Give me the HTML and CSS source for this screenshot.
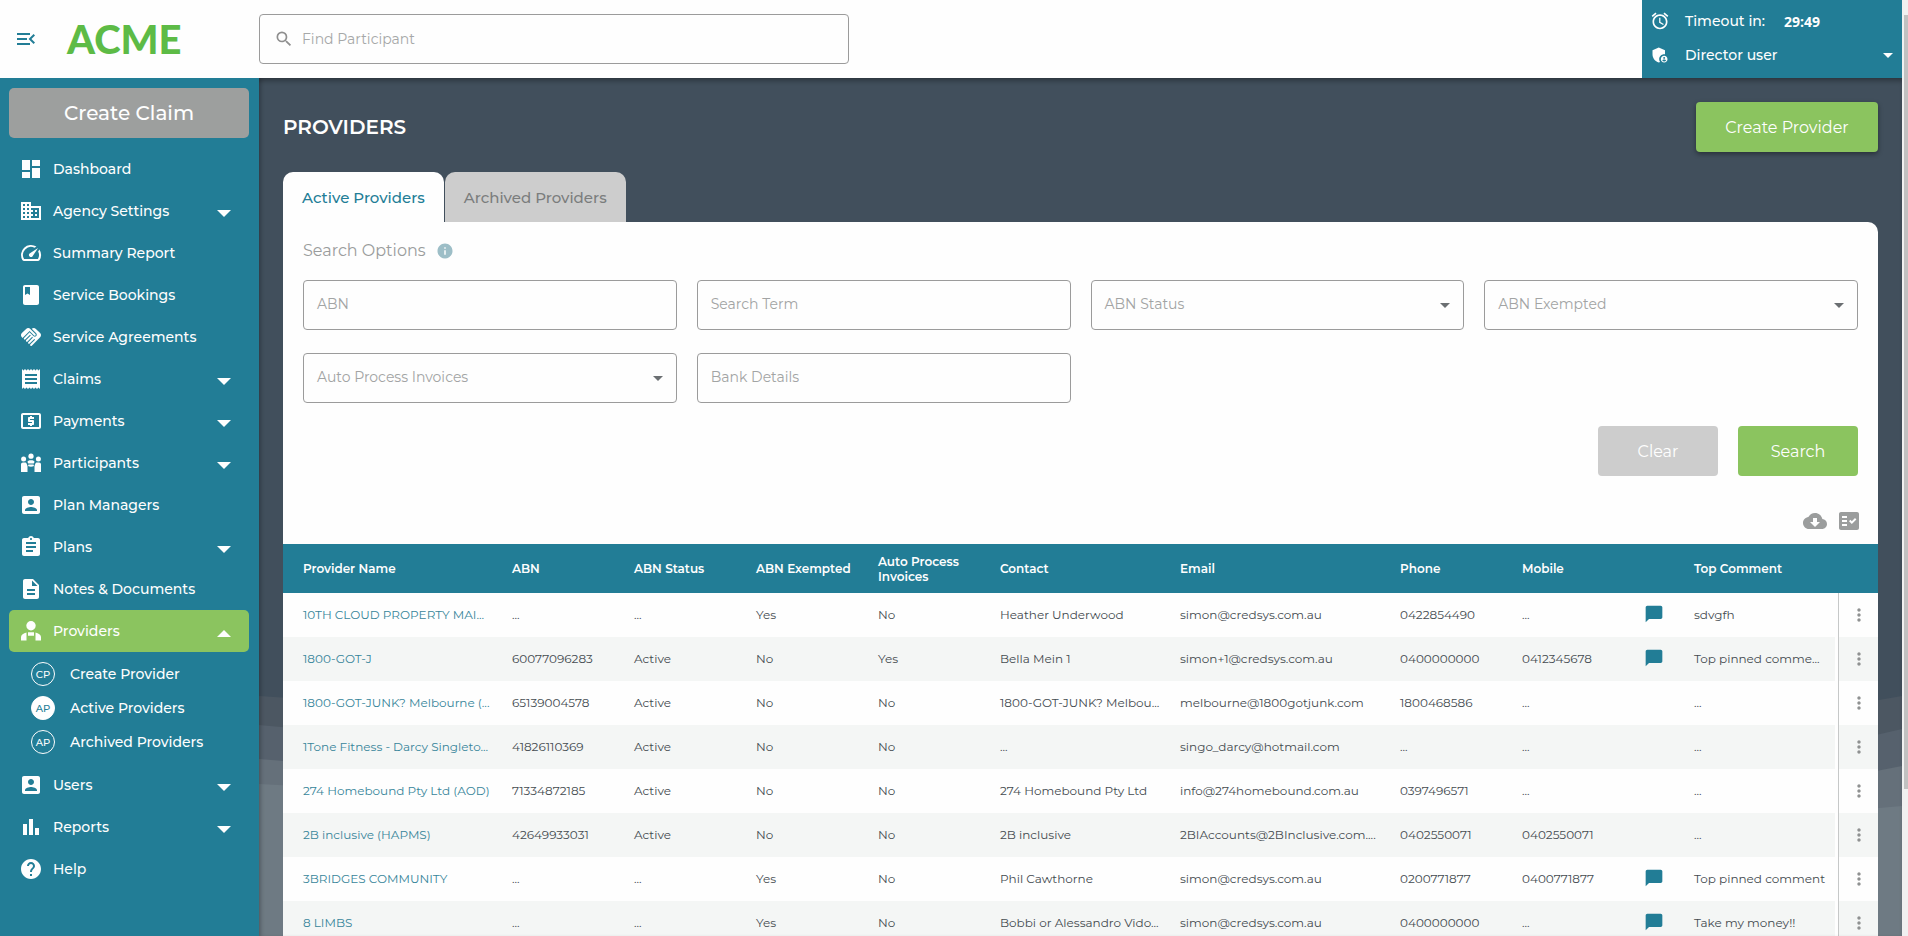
FILE: index.html
```html
<!DOCTYPE html>
<html lang="en">
<head>
    <meta charset="UTF-8">
    <meta name="viewport" content="width=device-width, initial-scale=1.0">
    <title>Providers</title>
    <link rel="stylesheet" href="styles.css">
</head>
<body>
    <!-- Icon sprite -->
    <svg class="sprite" aria-hidden="true">
        <symbol id="i-menu" viewBox="0 0 24 24"><path d="M3 18h13v-2H3v2zm0-5h10v-2H3v2zm0-7v2h13V6H3zm18 9.59L17.42 12 21 8.41 19.59 7l-5 5 5 5L21 15.59z"/></symbol>
        <symbol id="i-search" viewBox="0 0 24 24"><path d="M15.5 14h-.79l-.28-.27A6.47 6.47 0 0 0 16 9.5 6.5 6.5 0 1 0 9.5 16c1.61 0 3.09-.59 4.23-1.57l.27.28v.79l5 4.99L20.49 19l-4.99-5zm-6 0C7.01 14 5 11.99 5 9.5S7.01 5 9.5 5 14 7.01 14 9.5 11.99 14 9.5 14z"/></symbol>
        <symbol id="i-alarm" viewBox="0 0 24 24"><path d="M22 5.72l-4.6-3.86-1.29 1.53 4.6 3.86L22 5.72zM7.88 3.39L6.6 1.86 2 5.71l1.29 1.53 4.59-3.85zM12.5 8H11v6l4.75 2.85.75-1.23-4-2.37V8zM12 4c-4.97 0-9 4.03-9 9s4.02 9 9 9c4.97 0 9-4.03 9-9s-4.03-9-9-9zm0 16c-3.87 0-7-3.13-7-7s3.13-7 7-7 7 3.13 7 7-3.13 7-7 7z"/></symbol>
        <symbol id="i-admin" viewBox="0 0 24 24"><path d="M17 11c.34 0 .67.04 1 .09V6.27L10.5 3 3 6.27v4.91c0 4.54 3.2 8.79 7.5 9.82.55-.13 1.08-.32 1.6-.55-.69-.98-1.1-2.17-1.1-3.45 0-3.31 2.69-6 6-6zm0 2c-2.21 0-4 1.79-4 4s1.79 4 4 4 4-1.79 4-4-1.79-4-4-4zm0 1.38c.62 0 1.12.51 1.12 1.12s-.51 1.12-1.12 1.12-1.12-.51-1.12-1.12.5-1.12 1.12-1.12zm0 5.37c-.93 0-1.74-.46-2.24-1.17.05-.72 1.51-1.08 2.24-1.08s2.19.36 2.24 1.08c-.5.71-1.31 1.17-2.24 1.17z"/></symbol>
        <symbol id="i-dashboard" viewBox="0 0 24 24"><path d="M3 13h8V3H3v10zm0 8h8v-6H3v6zm10 0h8V11h-8v10zm0-18v6h8V3h-8z"/></symbol>
        <symbol id="i-agency" viewBox="0 0 24 24"><path d="M12 7V3H2v18h20V7H12zM6 19H4v-2h2v2zm0-4H4v-2h2v2zm0-4H4V9h2v2zm0-4H4V5h2v2zm4 12H8v-2h2v2zm0-4H8v-2h2v2zm0-4H8V9h2v2zm0-4H8V5h2v2zm10 12h-8v-2h2v-2h-2v-2h2v-2h-2V9h8v10zm-2-8h-2v2h2v-2zm0 4h-2v2h2v-2z"/></symbol>
        <symbol id="i-speed" viewBox="0 0 24 24"><path d="M20.38 8.57l-1.23 1.85a8 8 0 0 1-.22 7.58H5.07A8 8 0 0 1 15.58 6.85l1.85-1.23A10 10 0 0 0 3.35 19a2 2 0 0 0 1.72 1h13.85a2 2 0 0 0 1.74-1 10 10 0 0 0-.27-10.44zm-9.79 6.84a2 2 0 0 0 2.83 0l5.66-8.49-8.49 5.66a2 2 0 0 0 0 2.83z"/></symbol>
        <symbol id="i-book" viewBox="0 0 24 24"><path d="M18 2H6c-1.1 0-2 .9-2 2v16c0 1.1.9 2 2 2h12c1.1 0 2-.9 2-2V4c0-1.1-.9-2-2-2zM6 4h5v8l-2.5-1.5L6 12V4z"/></symbol>
        <symbol id="i-handshake" viewBox="0 0 24 24"><path d="M16.48 10.41c-.39.39-1.04.39-1.43 0l-4.47-4.46-7.05 7.04-.66-.63c-1.17-1.17-1.17-3.07 0-4.24l4.24-4.24c1.17-1.17 3.07-1.17 4.24 0L16.48 9c.39.39.39 1.02 0 1.41zm.7-2.12c.78.78.78 2.05 0 2.83-1.27 1.27-2.61.22-2.83 0l-3.76-3.76-5.57 5.57c-.39.39-.39 1.02 0 1.41.39.39 1.02.39 1.42 0l4.62-4.62.71.71-4.62 4.62c-.39.39-.39 1.02 0 1.41.39.39 1.02.39 1.42 0l4.62-4.62.71.71-4.62 4.62c-.39.39-.39 1.02 0 1.41.39.39 1.02.39 1.41 0l4.62-4.62.71.71-4.62 4.62c-.39.39-.39 1.02 0 1.41.39.39 1.02.39 1.41 0l8.32-8.34c1.17-1.17 1.17-3.07 0-4.24l-4.24-4.24c-1.15-1.15-3.01-1.17-4.18-.06l4.47 4.47z"/></symbol>
        <symbol id="i-receipt" viewBox="0 0 24 24"><path d="M18 17H6v-2h12v2zm0-4H6v-2h12v2zm0-4H6V7h12v2zM3 22l1.5-1.5L6 22l1.5-1.5L9 22l1.5-1.5L12 22l1.5-1.5L15 22l1.5-1.5L18 22l1.5-1.5L21 22V2l-1.5 1.5L18 2l-1.5 1.5L15 2l-1.5 1.5L12 2l-1.5 1.5L9 2 7.5 3.5 6 2 4.5 3.5 3 2v20z"/></symbol>
        <symbol id="i-payment" viewBox="0 0 24 24"><path d="M11 17h2v-1h1c.55 0 1-.45 1-1v-3c0-.55-.45-1-1-1h-3v-1h4V8h-2V7h-2v1h-1c-.55 0-1 .45-1 1v3c0 .55.45 1 1 1h3v1H9v2h2v1zm9-13H4c-1.11 0-1.99.89-1.99 2L2 18c0 1.11.89 2 2 2h16c1.11 0 2-.89 2-2V6c0-1.11-.89-2-2-2zm0 14H4V6h16v12z"/></symbol>
        <symbol id="i-people" viewBox="0 0 24 24"><circle cx="12" cy="5.2" r="2.6"/><circle cx="4.6" cy="8" r="2.5"/><circle cx="19.4" cy="8" r="2.5"/><path d="M2 13.5c0-1.2.8-2 2-2h1.8c1 0 1.6.5 1.9 1.3l.8 2.2v6H2zM22 13.5c0-1.2-.8-2-2-2h-1.800c-1 0-1.600.5-1.900 1.300l-.8 2.200v6H22z"/><path d="M8.500 11c0-1.200 1.300-1.800 3.500-1.800s3.500.6 3.500 1.800l-.8 1.400H9.300zM9.500 13.500h5l.5 1.500c-1.800 1-4.200 1-6 0z"/></symbol>
        <symbol id="i-account" viewBox="0 0 24 24"><path d="M3 5v14c0 1.100.89 2 2 2h14c1.100 0 2-.9 2-2V5c0-1.100-.9-2-2-2H5c-1.110 0-2 .9-2 2zm12 4c0 1.660-1.340 3-3 3s-3-1.340-3-3 1.340-3 3-3 3 1.340 3 3zm-9 8c0-2 4-3.100 6-3.100s6 1.100 6 3.100v1H6v-1z"/></symbol>
        <symbol id="i-plans" viewBox="0 0 24 24"><path d="M19 3h-4.180C14.400 1.840 13.300 1 12 1c-1.300 0-2.400.84-2.820 2H5c-1.100 0-2 .9-2 2v14c0 1.100.9 2 2 2h14c1.100 0 2-.9 2-2V5c0-1.100-.9-2-2-2zm-7 0c.55 0 1 .45 1 1s-.45 1-1 1-1-.45-1-1 .45-1 1-1zm2 14H7v-2h7v2zm3-4H7v-2h10v2zm0-4H7V7h10v2z"/></symbol>
        <symbol id="i-notes" viewBox="0 0 24 24"><path d="M14 2H6c-1.100 0-1.990.9-1.990 2L4 20c0 1.100.89 2 1.990 2H18c1.100 0 2-.9 2-2V8l-6-6zm2 16H8v-2h8v2zm0-4H8v-2h8v2zm-3-5V3.500L18.500 9H13z"/></symbol>
        <symbol id="i-provider" viewBox="0 0 24 24"><circle cx="12" cy="6.800" r="4.700"/><path d="M7.500 13.500v8H2v-3.500c0-2.300 2.500-3.800 5.500-4.500zM16.500 13.500v8H22v-3.500c0-2.300-2.500-3.800-5.500-4.500zM9 13.300h6v3.400H9z"/></symbol>
        <symbol id="i-reports" viewBox="0 0 24 24"><path d="M4 20h4V9H4zM10 20h4V4h-4zM16 20h4v-7h-4z"/></symbol>
        <symbol id="i-help" viewBox="0 0 24 24"><path d="M12 2C6.480 2 2 6.480 2 12s4.480 10 10 10 10-4.480 10-10S17.520 2 12 2zm1 17h-2v-2h2v2zm2.070-7.750l-.9.920C13.450 12.900 13 13.500 13 15h-2v-.5c0-1.100.45-2.100 1.170-2.830l1.240-1.260c.37-.36.590-.86.590-1.410 0-1.100-.9-2-2-2s-2 .9-2 2H8c0-2.210 1.790-4 4-4s4 1.790 4 4c0 .88-.36 1.680-.93 2.250z"/></symbol>
        <symbol id="i-info" viewBox="0 0 24 24"><path d="M12 2C6.480 2 2 6.480 2 12s4.480 10 10 10 10-4.480 10-10S17.520 2 12 2zm1 15h-2v-6h2v6zm0-8h-2V7h2v2z"/></symbol>
        <symbol id="i-cloud" viewBox="0 0 24 24"><path d="M19.350 10.040C18.670 6.590 15.640 4 12 4 9.110 4 6.600 5.640 5.350 8.040 2.340 8.360 0 10.910 0 14c0 3.310 2.690 6 6 6h13c2.760 0 5-2.240 5-5 0-2.640-2.050-4.780-4.650-4.960zM17 13l-5 5-5-5h3V9h4v4h3z"/></symbol>
        <symbol id="i-columns" viewBox="0 0 24 24"><path d="M20 3H4c-1.100 0-2 .9-2 2v14c0 1.100.9 2 2 2h16c1.100 0 2-.9 2-2V5c0-1.100-.9-2-2-2zM10 17H5v-2h5v2zm0-4H5v-2h5v2zm0-4H5V7h5v2zm4.820 6L12 12.160l1.410-1.410 1.410 1.420L17.990 9l1.420 1.420L14.820 15z"/></symbol>
        <symbol id="i-comment" viewBox="0 0 24 24"><path d="M20 2H4c-1.100 0-2 .9-2 2v18l4-4h14c1.100 0 2-.9 2-2V4c0-1.100-.9-2-2-2z"/></symbol>
        <symbol id="i-more" viewBox="0 0 24 24"><path d="M12 8c1.100 0 2-.9 2-2s-.9-2-2-2-2 .9-2 2 .9 2 2 2zm0 2c-1.100 0-2 .9-2 2s.9 2 2 2 2-.9 2-2-.9-2-2-2zm0 6c-1.100 0-2 .9-2 2s.9 2 2 2 2-.9 2-2-.9-2-2-2z"/></symbol>
        <symbol id="i-down" viewBox="0 0 14 7"><path d="M0 0h14L7 7z"/></symbol>
        <symbol id="i-up" viewBox="0 0 14 7"><path d="M0 7h14L7 0z"/></symbol>
    </svg>

    <div class="app">
        <header class="topbar">
            <div class="brand">
                <button class="icon-btn" aria-label="Toggle menu"><svg class="icon menu-icon"><use href="#i-menu"/></svg></button>
                <a href="#" class="logo">ACME</a>
            </div>
            <div class="find">
                <svg class="icon"><use href="#i-search"/></svg>
                <input type="search" aria-label="Find Participant" placeholder="Find Participant">
            </div>
            <div class="session">
                <div class="session-row">
                    <svg class="icon"><use href="#i-alarm"/></svg>
                    <span>Timeout in:</span>
                    <strong>29:49</strong>
                </div>
                <button class="session-row">
                    <svg class="icon"><use href="#i-admin"/></svg>
                    <span>Director user</span>
                    <svg class="caret small"><use href="#i-down"/></svg>
                </button>
            </div>
        </header>

        <div class="body">
            <nav class="sidebar">
                <button class="create-claim">Create Claim</button>
                <a href="#" class="nav-item"><svg class="icon"><use href="#i-dashboard"/></svg>Dashboard</a>
                <a href="#" class="nav-item"><svg class="icon"><use href="#i-agency"/></svg>Agency Settings<svg class="caret"><use href="#i-down"/></svg></a>
                <a href="#" class="nav-item"><svg class="icon"><use href="#i-speed"/></svg>Summary Report</a>
                <a href="#" class="nav-item"><svg class="icon"><use href="#i-book"/></svg>Service Bookings</a>
                <a href="#" class="nav-item"><svg class="icon"><use href="#i-handshake"/></svg>Service Agreements</a>
                <a href="#" class="nav-item"><svg class="icon"><use href="#i-receipt"/></svg>Claims<svg class="caret"><use href="#i-down"/></svg></a>
                <a href="#" class="nav-item"><svg class="icon"><use href="#i-payment"/></svg>Payments<svg class="caret"><use href="#i-down"/></svg></a>
                <a href="#" class="nav-item"><svg class="icon"><use href="#i-people"/></svg>Participants<svg class="caret"><use href="#i-down"/></svg></a>
                <a href="#" class="nav-item"><svg class="icon"><use href="#i-account"/></svg>Plan Managers</a>
                <a href="#" class="nav-item"><svg class="icon"><use href="#i-plans"/></svg>Plans<svg class="caret"><use href="#i-down"/></svg></a>
                <a href="#" class="nav-item"><svg class="icon"><use href="#i-notes"/></svg>Notes &amp; Documents</a>
                <a href="#" class="nav-item active"><svg class="icon"><use href="#i-provider"/></svg>Providers<svg class="caret"><use href="#i-up"/></svg></a>
                <div class="subnav">
                    <a href="#"><span class="badge">CP</span>Create Provider</a>
                    <a href="#" class="current"><span class="badge">AP</span>Active Providers</a>
                    <a href="#"><span class="badge">AP</span>Archived Providers</a>
                </div>
                <a href="#" class="nav-item"><svg class="icon"><use href="#i-account"/></svg>Users<svg class="caret"><use href="#i-down"/></svg></a>
                <a href="#" class="nav-item"><svg class="icon"><use href="#i-reports"/></svg>Reports<svg class="caret"><use href="#i-down"/></svg></a>
                <a href="#" class="nav-item"><svg class="icon"><use href="#i-help"/></svg>Help</a>
            </nav>

            <main>
                <!-- Wave backdrop -->
                <svg class="backdrop" viewBox="0 0 1643 858" preserveAspectRatio="none" aria-hidden="true">
                    <path fill="#4c5762" d="M0 618Q1200 700 1643 618V858H0z"/>
                    <path fill="#56616d" d="M0 647Q1200 760 1643 651V858H0z"/>
                    <path fill="#65707a" d="M0 681Q1200 780 1643 688V858H0z"/>
                    <path fill="#6e7a83" d="M0 706Q1200 770 1643 728V858H0z"/>
                </svg>

                <div class="page-head">
                    <h1>PROVIDERS</h1>
                    <button class="btn green raised">Create Provider</button>
                </div>

                <div class="tabs" role="tablist">
                    <button class="tab selected" role="tab" aria-selected="true">Active Providers</button>
                    <button class="tab" role="tab" aria-selected="false">Archived Providers</button>
                </div>

                <section class="panel">
                    <form class="filters">
                        <h2>Search Options <svg class="icon info"><use href="#i-info"/></svg></h2>
                        <div class="fields">
                            <div class="field"><input type="text" id="abn"><label for="abn">ABN</label></div>
                            <div class="field"><input type="text" id="term"><label for="term">Search Term</label></div>
                            <div class="field"><select id="abn-status"><option></option></select><label for="abn-status">ABN Status</label><svg class="caret small"><use href="#i-down"/></svg></div>
                            <div class="field"><select id="abn-exempted"><option></option></select><label for="abn-exempted">ABN Exempted</label><svg class="caret small"><use href="#i-down"/></svg></div>
                            <div class="field"><select id="auto-process"><option></option></select><label for="auto-process">Auto Process Invoices</label><svg class="caret small"><use href="#i-down"/></svg></div>
                            <div class="field"><input type="text" id="bank"><label for="bank">Bank Details</label></div>
                        </div>
                        <div class="actions">
                            <button type="reset" class="btn grey">Clear</button>
                            <button type="button" class="btn green">Search</button>
                        </div>
                    </form>

                    <div class="tools">
                        <button class="icon-btn" aria-label="Download"><svg class="icon"><use href="#i-cloud"/></svg></button>
                        <button class="icon-btn" aria-label="Choose columns"><svg class="icon"><use href="#i-columns"/></svg></button>
                    </div>

                    <table>
                        <colgroup>
                            <col class="c-name"><col class="c-std"><col class="c-std"><col class="c-std"><col class="c-std">
                            <col class="c-contact"><col class="c-email"><col class="c-std"><col class="c-std">
                            <col class="c-flag"><col class="c-comment"><col class="c-menu">
                        </colgroup>
                        <thead>
                            <tr>
                                <th>Provider Name</th>
                                <th>ABN</th>
                                <th>ABN Status</th>
                                <th>ABN Exempted</th>
                                <th>Auto Process Invoices</th>
                                <th>Contact</th>
                                <th>Email</th>
                                <th>Phone</th>
                                <th>Mobile</th>
                                <th></th>
                                <th>Top Comment</th>
                                <th></th>
                            </tr>
                        </thead>
                        <tbody id="rows"></tbody>
                    </table>
                </section>
            </main>
        </div>
    </div>
    <div class="scroll-track" aria-hidden="true"><div class="scroll-thumb"></div></div>

    <script src="script.js"></script>
</body>
</html>
```
FILE: styles.css
```css
* { box-sizing: border-box; }
body {
    margin: 0;
    height: 100vh;
    display: flex;
    overflow: hidden;
    font-family: Montserrat, Inter, sans-serif;
    font-size: 14px;
    color: #444b50;
    background: #fefefe;
}
button, input, select { font: inherit; }
button { border: none; cursor: pointer; }
a { text-decoration: none; color: inherit; }
.sprite { position: absolute; width: 0; height: 0; }
.icon { width: 24px; height: 24px; fill: currentColor; flex: none; }
.caret { width: 14px; height: 7px; fill: currentColor; flex: none; }
.caret.small { width: 10px; height: 5px; }
.icon-btn { background: none; padding: 0; display: flex; color: inherit; }

.app { flex: 1; min-width: 0; display: flex; flex-direction: column; }

/* Top bar */
.topbar {
    display: flex;
    align-items: center;
    height: 78px;
    flex: none;
    background: #fefefe;
    position: relative;
    z-index: 2;
}
.brand { width: 259px; display: flex; align-items: center; padding-left: 14px; gap: 29px; color: #227d96; }
.logo { font: 900 40px/48px Lato, sans-serif; color: #5dbb46; }
.find {
    width: 590px;
    height: 50px;
    display: flex;
    align-items: center;
    gap: 8px;
    padding: 0 14px;
    border: 1px solid #9b9b9b;
    border-radius: 4px;
    color: #8f8f8f;
}
.find .icon { width: 20px; height: 20px; }
.find input { flex: 1; border: none; outline: none; background: none; padding: 0; }
.find input::placeholder { color: #a6a8a8; }
.session {
    margin-left: auto;
    width: 260px;
    height: 78px;
    background: #227d96;
    color: #fefefe;
    padding: 4px 9px 6px 8px;
}
.session-row {
    display: flex;
    align-items: center;
    width: 100%;
    height: 34px;
    padding: 0;
    gap: 15px;
    background: none;
    color: inherit;
    font-weight: 500;
}
.session-row .icon { width: 20px; height: 20px; }
.session-row strong { margin-left: 4px; font-family: "Open Sans", sans-serif; }
.session-row .caret { margin-left: auto; }

.body { flex: 1; min-height: 0; display: flex; }

/* Sidebar */
.sidebar {
    width: 259px;
    flex: none;
    padding: 10px 10px 0 9px;
    background: #227d96;
    color: #fefefe;
    font-weight: 500;
}
.create-claim {
    width: 100%;
    height: 50px;
    margin-bottom: 10px;
    border-radius: 5px;
    background: #9d9f9e;
    color: #fefefe;
    font-size: 20px;
    font-weight: 500;
}
.nav-item {
    display: flex;
    align-items: center;
    gap: 10px;
    height: 42px;
    padding: 0 18px 0 10px;
    border-radius: 5px;
}
.nav-item .caret { margin-left: auto; margin-top: 4px; }
.nav-item.active { background: #8bc45f; }
.subnav { padding: 5px 0 5px 22px; }
.subnav a { display: flex; align-items: center; gap: 15px; height: 34px; }
.badge {
    width: 24px;
    height: 24px;
    display: flex;
    align-items: center;
    justify-content: center;
    border: 1px solid #fefefe;
    border-radius: 50%;
    font-size: 10px;
}
.current .badge { background: #fefefe; color: #227d96; }

/* Main */
main {
    flex: 1;
    min-width: 0;
    padding: 24px 24px 0;
    position: relative;
    overflow: hidden;
    background: #414f5c;
}
main::after {
    content: "";
    position: absolute;
    inset: 0;
    box-shadow: inset 0 5px 5px -2px rgba(0, 0, 0, 0.3), inset 4px 0 4px -2px rgba(0, 0, 0, 0.2);
    pointer-events: none;
}
.backdrop { position: absolute; inset: 0; width: 100%; height: 100%; }
.page-head, .tabs, .panel { position: relative; }
.page-head { display: flex; align-items: center; justify-content: space-between; margin-bottom: 20px; }
h1 { margin: 0; font-size: 20px; font-weight: 600; color: #fefefe; }
.btn {
    width: 120px;
    height: 50px;
    border-radius: 4px;
    color: #fefefe;
    font-size: 16px;
}
.green { background: #8bc45f; }
.grey { background: #cdcdcd; }
.raised { width: 182px; box-shadow: 0 2px 5px rgba(0, 0, 0, 0.4); }
.tabs { display: flex; gap: 1px; }
.tab {
    height: 50px;
    padding: 0 19px;
    border-radius: 10px 10px 0 0;
    background: #cdcdcd;
    color: #7b7d7d;
    font-size: 15px;
    font-weight: 500;
}
.tab.selected { background: #fefefe; color: #227d96; }
.panel { background: #fefefe; border-radius: 0 10px 0 0; }

/* Search options */
.filters { padding: 19px 20px 0; }
h2 {
    display: flex;
    align-items: center;
    gap: 10px;
    margin: 0 0 19px;
    font-size: 16px;
    line-height: 20px;
    font-weight: 400;
    color: #9a9c9c;
}
.info { width: 18px; height: 18px; color: #9dbec7; }
.fields { display: grid; grid-template-columns: repeat(4, 1fr); gap: 23px 20px; }
.field { position: relative; height: 50px; }
.field input, .field select {
    width: 100%;
    height: 100%;
    padding: 0 13px;
    border: 1px solid #9b9b9b;
    border-radius: 4px;
    background: #fefefe;
    appearance: none;
}
.field label {
    position: absolute;
    left: 14px;
    top: 14px;
    line-height: 20px;
    color: #a2a4a4;
    pointer-events: none;
}
.field .caret { position: absolute; right: 14px; top: 23px; color: #6b6f72; pointer-events: none; }
.actions { display: flex; justify-content: flex-end; gap: 20px; margin-top: 23px; }
.tools {
    display: flex;
    justify-content: flex-end;
    gap: 10px;
    padding: 33px 17px 11px;
    color: #9b9d9d;
}

/* Providers table */
table { width: 100%; table-layout: fixed; border-collapse: separate; border-spacing: 0; font-size: 12px; }
.c-name { width: 219px; }
.c-std { width: 122px; }
.c-contact { width: 180px; }
.c-email { width: 220px; }
.c-flag { width: 50px; }
.c-comment { width: 154px; }
.c-menu { width: 40px; }
th, td { padding: 0 10px; text-align: left; }
th:first-child, td:first-child { padding-left: 20px; }
th { height: 49px; background: #227d96; color: #fefefe; font-weight: 600; line-height: 15px; }
td { height: 44px; padding-bottom: 2px; white-space: nowrap; overflow: hidden; text-overflow: ellipsis; }
td a { color: #37859a; }
tbody tr:nth-child(even) { background: #f4f6f5; }
td:nth-child(11) { padding-right: 5px; border-right: 3px solid #fefefe; }
td:last-child { padding: 0; border-left: 1px solid #c6c8c8; }
td .icon-btn { margin: 0 auto; color: #8f9191; }
td .icon { width: 20px; height: 20px; display: block; }
.flag { color: #227d96; }

/* Page scrollbar */
.scroll-track { width: 6px; flex: none; padding: 15px 0 0 2px; background: #f0f0f0; }
.scroll-thumb { height: 84%; background: #c1c1c1; }
```
FILE: script.js
```js
const columns = ['name', 'abn', 'status', 'exempt', 'auto', 'contact', 'email', 'phone', 'mobile', 'flag', 'comment'];

// Empty values are shown as "..."
const providers = [
    ['10TH CLOUD PROPERTY MAI...', '', '', 'Yes', 'No', 'Heather Underwood', 'simon@credsys.com.au', '0422854490', '', true, 'sdvgfh'],
    ['1800-GOT-J', '60077096283', 'Active', 'No', 'Yes', 'Bella Mein 1', 'simon+1@credsys.com.au', '0400000000', '0412345678', true, 'Top pinned comme...'],
    ['1800-GOT-JUNK? Melbourne (...', '65139004578', 'Active', 'No', 'No', '1800-GOT-JUNK? Melbou...', 'melbourne@1800gotjunk.com', '1800468586', '', false, ''],
    ['1Tone Fitness - Darcy Singleto...', '41826110369', 'Active', 'No', 'No', '', 'singo_darcy@hotmail.com', '', '', false, ''],
    ['274 Homebound Pty Ltd (AOD)', '71334872185', 'Active', 'No', 'No', '274 Homebound Pty Ltd', 'info@274homebound.com.au', '0397496571', '', false, ''],
    ['2B inclusive (HAPMS)', '42649933031', 'Active', 'No', 'No', '2B inclusive', '2BIAccounts@2BInclusive.com....', '0402550071', '0402550071', false, ''],
    ['3BRIDGES COMMUNITY', '', '', 'Yes', 'No', 'Phil Cawthorne', 'simon@credsys.com.au', '0200771877', '0400771877', true, 'Top pinned comment'],
    ['8 LIMBS', '', '', 'Yes', 'No', 'Bobbi or Alessandro Vido...', 'simon@credsys.com.au', '0400000000', '', true, 'Take my money!!'],
];

function cell(key, value) {
    if (key === 'name') return `<td><a href="#">${value}</a></td>`;
    if (key === 'flag') return value ? '<td><svg class="icon flag"><use href="#i-comment"/></svg></td>' : '<td></td>';
    return `<td>${value || '...'}</td>`;
}

document.getElementById('rows').innerHTML = providers.map(row => `
    <tr>
        ${row.map((value, i) => cell(columns[i], value)).join('')}
        <td><button class="icon-btn" aria-label="Row actions"><svg class="icon"><use href="#i-more"/></svg></button></td>
    </tr>
`).join('');
```
